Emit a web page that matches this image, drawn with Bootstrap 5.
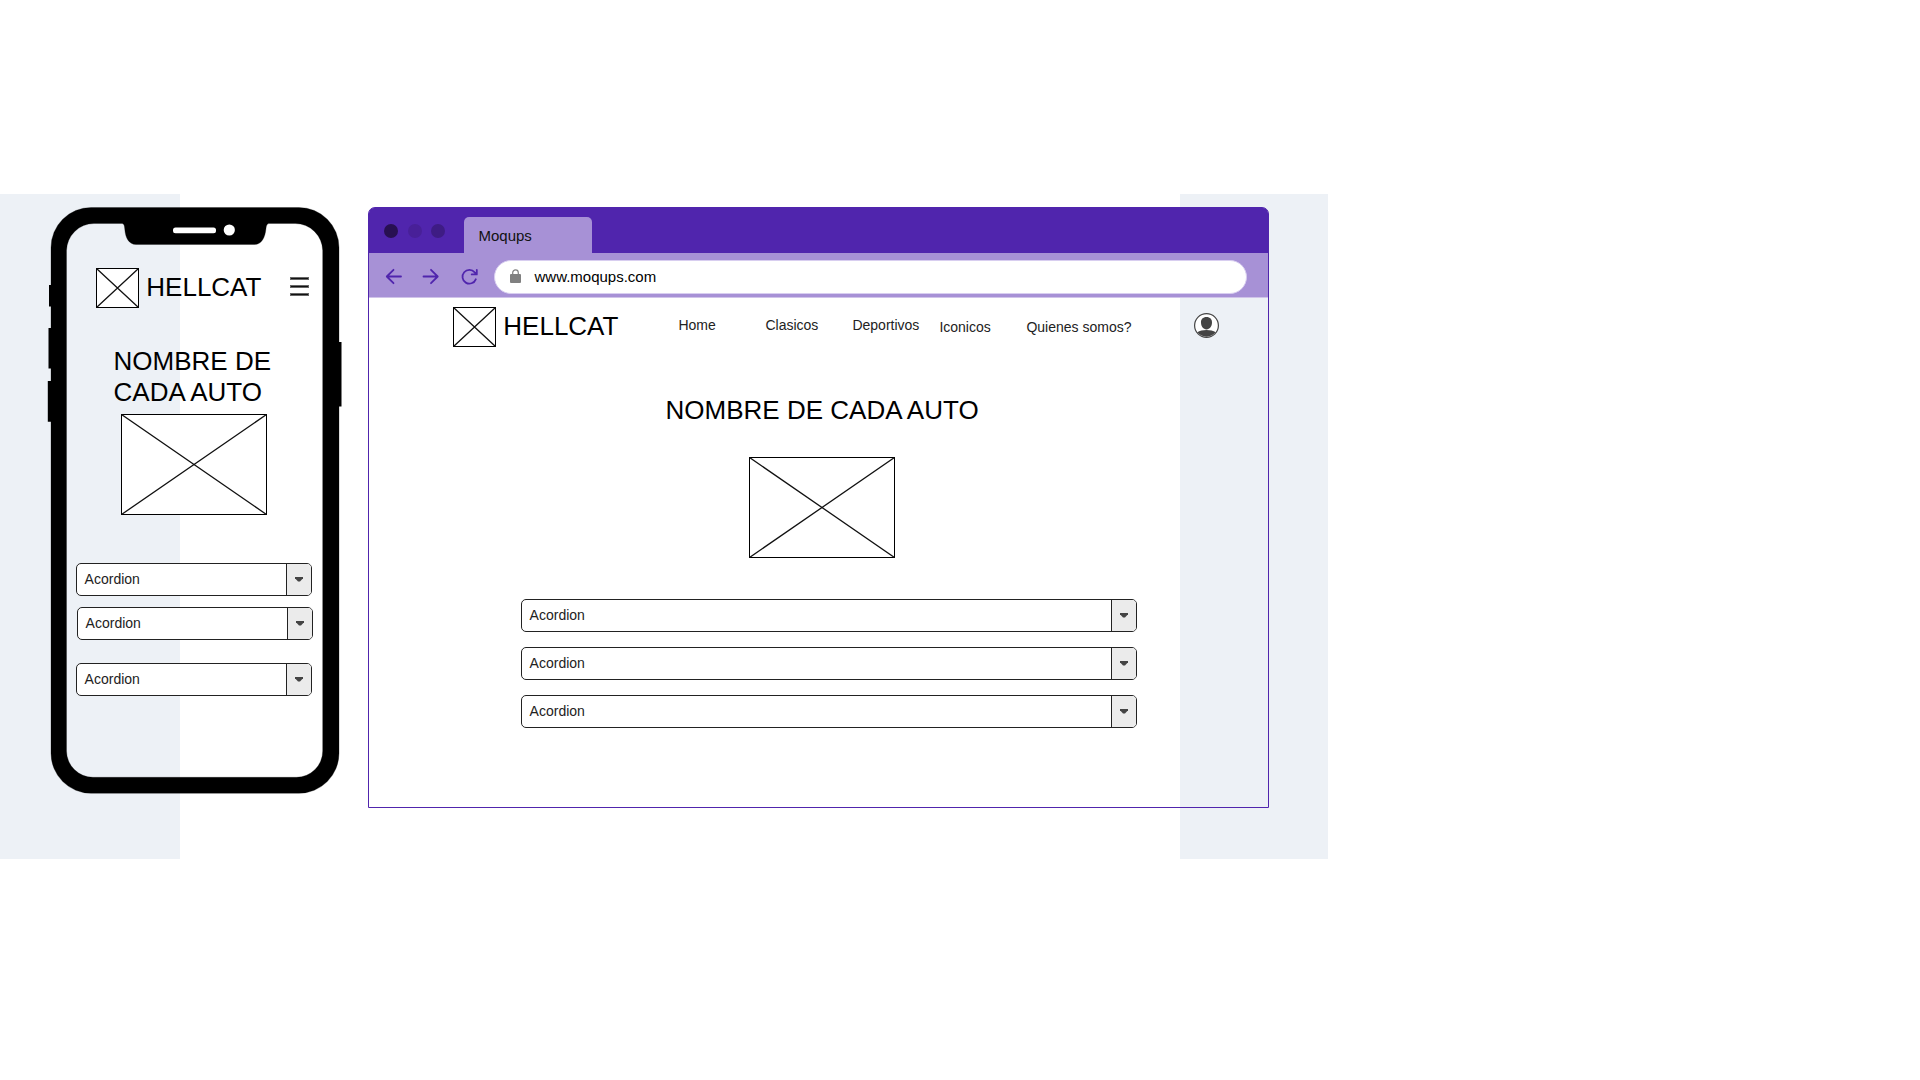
<!DOCTYPE html>
<html lang="es">
<head>
<meta charset="utf-8">
<meta name="viewport" content="width=device-width, initial-scale=1">
<title>Hellcat – wireframe</title>
<link href="https://cdn.jsdelivr.net/npm/bootstrap@5.3.0/dist/css/bootstrap.min.css" rel="stylesheet">
<style>
  body { font-family: "Liberation Sans", Arial, sans-serif; font-size: 14px; color: #222; background: #fff; padding-top: 194px; overflow: hidden; }
  .board { width: 1328px; height: 665px; padding-top: 13px; background: linear-gradient(to right, #edf1f6 180px, #fff 180px, #fff 1180px, #edf1f6 1180px); }
  .headline { font-size: 26px; line-height: 31px; color: #000; }
  .brand-name { margin-left: 7.3px; padding-top: 4px; }
  .placeholder-img { display: block; flex: none; }
  .placeholder-img rect { fill: #fff; stroke: #000; }
  .placeholder-img path { stroke: #111; stroke-width: 1.3; fill: none; }

  /* phone */
  .phone { width: 296px; height: 588px; margin-left: 47px; }
  .phone-frame { left: 0; top: 0; }
  .phone-screen { padding: 61px 0 0 29px; }
  .phone-brand { padding-left: 20px; }
  .phone-title { width: 190px; margin: 38px 0 0 37.6px; }
  .phone-photo { margin: 6px 0 48px 45px; }
  .burger { margin-left: 29px; }

  /* browser */
  .browser { width: 901px; height: 601px; margin-left: 25px; border: 1px solid #5025ad; border-radius: 7px 7px 0 0; }
  .tabstrip { height: 45px; padding-left: 15px; background: #5025ad; border-radius: 5px 5px 0 0; }
  .dot { width: 14px; height: 14px; margin-right: 9.7px; }
  .dot-a { background: #281052; } .dot-b { background: #482098; } .dot-c { background: #3e1c84; }
  .tab { width: 127.5px; height: 36px; margin-left: 9px; padding-left: 14.4px; font-size: 15px; line-height: 38px; color: #111; background: #a791d6; border-radius: 5px 5px 0 0; }
  .toolbar { height: 45px; padding: 3px 0 0 16px; background: #a791d6; border-bottom: 1px solid #d0c4e9; }
  .tool { stroke: #5025ad; stroke-width: 1.8; fill: none; stroke-linecap: round; stroke-linejoin: round; }
  .address { width: 753px; height: 34px; margin-left: 16px; padding-left: 15px; border: 1px solid #d8cef0; font-size: 15px; color: #000; }
  .address-text { margin-left: 13.5px; line-height: 32px; }
  .site-nav { padding: 9px 0 0 84px; height: 49px; }
  .site-links { margin: 8px 0 0 60px; }
  .site-links .nav-link { width: 87px; padding: 0; line-height: 21px; color: #222; white-space: nowrap; }
  .site-links .nav-link.low { padding-top: 2px; }
  .avatar { margin: 6px 0 0 81px; }
  .site-title { margin: 48px 0 0 296.6px; }
  .site-photo { margin: 31px 0 41px 380px; }

  /* select-like accordion rows */
  .fold { height: 33px; border: 1px solid #222; border-radius: 5px; background: #fff; overflow: hidden; color: #222; padding: 0; font-size: 14px; }
  .fold-label { padding-left: 7.6px; line-height: 31px; }
  .fold-caret { width: 25px; background: #ebebeb; border-left: 1px solid #222; }
  .phone .fold { width: 236px; }
  .browser .fold { width: 616px; }
  .browser .folds { margin-left: 152px; gap: 15px; }
  .fold-shift { margin: 11px 0 23px 1px; }
</style>
<script src="https://cdn.jsdelivr.net/npm/bootstrap@5.3.0/dist/js/bootstrap.bundle.min.js"></script>
</head>
<body>
<svg class="d-none" xmlns="http://www.w3.org/2000/svg">
  <symbol id="caret" viewBox="0 0 8 5"><path d="M0 0h8v1.2L5 4.6H3L0 1.2z" fill="#444"/></symbol>
</svg>
<main class="board d-flex align-items-start">

  <section class="phone position-relative flex-shrink-0">
    <svg class="phone-frame position-absolute" width="296" height="588" viewBox="47 207 296 588">
      <path d="M52 285h-3v21.500h3zM52 328h-3.500v40.500h3.500zM52 381h-4.200v40.700h4.200zM338 342h3.500v64.500h-3.500z"/>
      <path fill-rule="evenodd" stroke="#000" stroke-opacity=".35" stroke-width=".8" d="M91 207.500H299a40 40 0 0 1 40 40V753.300a40 40 0 0 1-40 40H91a40 40 0 0 1-40-40V247.500a40 40 0 0 1 40-40z
        M94 223.500a27.500 27.500 0 0 0-27.500 27V751a26.500 26.500 0 0 0 26.500 26.300H296.500a26.300 26.300 0 0 0 26.200-26.300V250.500a27.500 27.500 0 0 0-27.500-27H269.500c-2.500 0-3 1.500-3.500 5-1 9.500-4.500 16-11.500 16H136c-7 0-10.500-6.500-11.200-15-.3-4-.8-6-3.300-6z"/>
      <rect x="173" y="227.600" width="43" height="5.600" rx="2.500" fill="#fff"/>
      <circle cx="229.300" cy="230" r="5.600" fill="#fff"/>
    </svg>
    <div class="phone-screen position-relative">
      <header class="phone-brand d-flex">
        <svg class="placeholder-img" width="43" height="40"><rect x=".5" y=".5" width="42" height="39"/><path d="M.5.5l42 39M42.500.5l-42 39"/></svg>
        <div class="headline brand-name">HELLCAT</div>
        <svg class="burger mt-2" width="20" height="22" fill="#666"><path d="M0 1h19v3H0zM0 9h19v3H0zM0 17h19v3H0z"/><path d="M1 2h17v1H1zM1 10h17v1H1zM1 18h17v1H1z" fill="#111"/></svg>
      </header>
      <h1 class="phone-title headline fw-normal">NOMBRE DE CADA AUTO</h1>
      <svg class="placeholder-img phone-photo" width="146" height="101"><rect x=".5" y=".5" width="145" height="100"/><path d="M.5.5l145 100M145.500.5l-145 100"/></svg>
      <div class="d-flex flex-column align-items-start">
        <button class="fold d-flex text-start"><span class="fold-label flex-grow-1">Acordion</span><span class="fold-caret h-100 d-flex align-items-center justify-content-center"><svg width="8" height="5"><use href="#caret"/></svg></span></button>
        <button class="fold fold-shift d-flex text-start"><span class="fold-label flex-grow-1">Acordion</span><span class="fold-caret h-100 d-flex align-items-center justify-content-center"><svg width="8" height="5"><use href="#caret"/></svg></span></button>
        <button class="fold d-flex text-start"><span class="fold-label flex-grow-1">Acordion</span><span class="fold-caret h-100 d-flex align-items-center justify-content-center"><svg width="8" height="5"><use href="#caret"/></svg></span></button>
      </div>
    </div>
  </section>

  <section class="browser flex-shrink-0">
    <div class="tabstrip d-flex align-items-end">
      <div class="d-flex align-self-center">
        <span class="dot dot-a rounded-circle"></span><span class="dot dot-b rounded-circle"></span><span class="dot dot-c rounded-circle"></span>
      </div>
      <div class="tab">Moqups</div>
    </div>
    <div class="toolbar d-flex align-items-center">
      <svg class="tool" width="93" height="18" viewBox="385 268 93 18">
        <path d="M401 276.500H387M393.500 269.800L386.800 276.500L393.500 283.200"/>
        <path d="M423.500 276.500H437.500M431 269.800L437.700 276.500L431 283.200"/>
        <path d="M475.800 279.300A6.900 6.900 0 1 1 474.700 272.300L476.500 274.200M476.800 269.800V274.400H471.700"/>
      </svg>
      <div class="address d-flex align-items-center rounded-pill bg-white">
        <svg width="11" height="15" viewBox="0 0 11 15"><rect y="5" width="11" height="9" rx="1" fill="#808080"/><path d="M2.700 5.500V3.700a2.800 2.800 0 0 1 5.600 0v1.800" fill="none" stroke="#808080" stroke-width="1.200"/></svg>
        <span class="address-text">www.moqups.com</span>
      </div>
    </div>
    <nav class="site-nav d-flex align-items-start">
      <svg class="placeholder-img" width="43" height="40"><rect x=".5" y=".5" width="42" height="39"/><path d="M.5.5l42 39M42.500.5l-42 39"/></svg>
      <div class="headline brand-name">HELLCAT</div>
      <div class="site-links nav flex-nowrap">
        <a class="nav-link" href="#">Home</a>
        <a class="nav-link" href="#">Clasicos</a>
        <a class="nav-link" href="#">Deportivos</a>
        <a class="nav-link low" href="#">Iconicos</a>
        <a class="nav-link low" href="#">Quienes somos?</a>
      </div>
      <svg class="avatar" width="25" height="25" viewBox="0 0 25 25">
        <circle cx="12.500" cy="12.500" r="11.900" fill="#fff" stroke="#444" stroke-width="1.200"/>
        <path d="M12.500 4c3.600 0 5.700 2.200 5.500 5.800-.2 3.900-2.300 6.600-5.500 6.600S7.200 13.700 7 9.800C6.800 6.200 8.900 4 12.500 4z" fill="#444"/>
        <path d="M3.300 19.300c2.400-1.600 5.600-2.400 9.200-2.400s6.800.8 9.200 2.400a11.800 11.800 0 0 1-18.400 0z" fill="#444"/>
      </svg>
    </nav>
    <h2 class="site-title headline fw-normal">NOMBRE DE CADA AUTO</h2>
    <svg class="placeholder-img site-photo" width="146" height="101"><rect x=".5" y=".5" width="145" height="100"/><path d="M.5.5l145 100M145.500.5l-145 100"/></svg>
    <div class="folds d-flex flex-column align-items-start">
      <button class="fold d-flex text-start"><span class="fold-label flex-grow-1">Acordion</span><span class="fold-caret h-100 d-flex align-items-center justify-content-center"><svg width="8" height="5"><use href="#caret"/></svg></span></button>
      <button class="fold d-flex text-start"><span class="fold-label flex-grow-1">Acordion</span><span class="fold-caret h-100 d-flex align-items-center justify-content-center"><svg width="8" height="5"><use href="#caret"/></svg></span></button>
      <button class="fold d-flex text-start"><span class="fold-label flex-grow-1">Acordion</span><span class="fold-caret h-100 d-flex align-items-center justify-content-center"><svg width="8" height="5"><use href="#caret"/></svg></span></button>
    </div>
  </section>
</main>
</body>
</html>
